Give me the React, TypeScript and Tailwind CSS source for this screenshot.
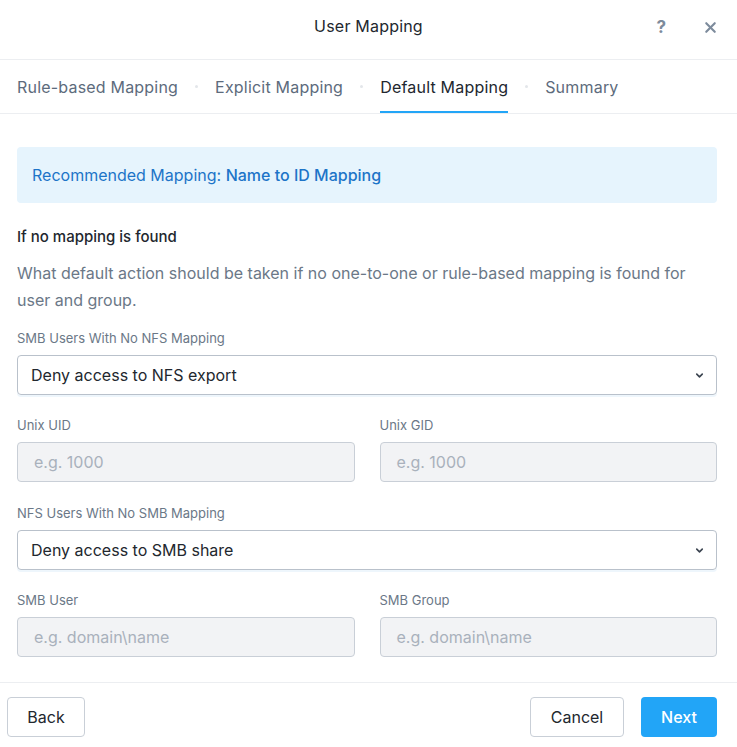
import { ChevronDown, X } from "lucide-react";

const TABS = ["Rule-based Mapping", "Explicit Mapping", "Default Mapping", "Summary"];

const Label = ({ children }: { children: React.ReactNode }) => (
  <div className="text-[13px] text-[#6b7887] leading-4 mb-[9px]">{children}</div>
);

const Select = ({ value }: { value: string }) => (
  <div className="h-10 rounded-[4px] border border-[#b9c1cb] flex items-center justify-between pl-[13px] pr-[11px] shadow-[0_2px_0_#eef6fc]">
    <span className="text-[16px] text-[#22272e]">{value}</span>
    <ChevronDown className="w-[11px] h-[11px] text-[#3b4450]" strokeWidth={3.5} />
  </div>
);

const Input = ({ placeholder }: { placeholder: string }) => (
  <div className="h-10 rounded-[4px] border border-[#c9cfd7] bg-[#f2f3f5] flex items-center px-[16px]">
    <span className="text-[16px] text-[#a9b1bc]">{placeholder}</span>
  </div>
);

export default function App() {
  return (
    <div className="w-[737px] h-[747px] bg-white flex flex-col font-['Inter',_sans-serif] overflow-hidden">
      {/* Header */}
      <div className="h-[60px] flex items-center justify-center relative border-b border-[#eceef1] pb-[8px] shrink-0">
        <span className="text-[16px] text-[#22272e] tracking-[0.2px]">User Mapping</span>
        <span className="absolute right-[71px] top-[15px] text-[17px] font-bold text-[#7d8b9c]">?</span>
        <X className="absolute right-[18px] top-[19px] w-[17px] h-[17px] text-[#7d8b9c]" strokeWidth={3} />
      </div>

      {/* Tabs */}
      <div className="h-[54px] flex items-stretch px-[17px] border-b border-[#eceef1] shrink-0">
        {TABS.map((t, i) => (
          <div key={t} className="flex items-stretch">
            {i > 0 && (
              <div className="flex items-center px-[17px]">
                <span className="w-[3px] h-[3px] rounded-full bg-[#e3e6ea]" />
              </div>
            )}
            <div
              className={
                "flex items-center text-[16px] tracking-[0.2px] border-b-2 pt-[2px] " +
                (t === "Default Mapping"
                  ? "border-[#22a5f7] text-[#22272e]"
                  : "border-transparent text-[#5d6b7c]")
              }
            >
              {t}
            </div>
          </div>
        ))}
      </div>

      {/* Body */}
      <div className="flex-1 pl-[17px] pr-[20px] pt-[33px] flex flex-col">
        <div className="h-[56px] rounded-[4px] bg-[#e6f4fd] flex items-center px-[15px] text-[16px] text-[#1d74c8]">
          Recommended Mapping:&nbsp;<span className="font-medium">Name to ID Mapping</span>
        </div>

        <div className="mt-[24px] text-[15px] font-medium text-[#22272e] leading-5">If no mapping is found</div>
        <p className="mt-[13px] text-[16px] text-[#6b7887] leading-[27px]">
          What default action should be taken if no one-to-one or rule-based mapping is found for user and group.
        </p>

        <div className="mt-[16px]">
          <Label>SMB Users With No NFS Mapping</Label>
          <Select value="Deny access to NFS export" />
        </div>

        <div className="mt-[22px] grid grid-cols-2 gap-[25px]">
          <div>
            <Label>Unix UID</Label>
            <Input placeholder="e.g. 1000" />
          </div>
          <div>
            <Label>Unix GID</Label>
            <Input placeholder="e.g. 1000" />
          </div>
        </div>

        <div className="mt-[23px]">
          <Label>NFS Users With No SMB Mapping</Label>
          <Select value="Deny access to SMB share" />
        </div>

        <div className="mt-[22px] grid grid-cols-2 gap-[25px]">
          <div>
            <Label>SMB User</Label>
            <Input placeholder="e.g. domain\name" />
          </div>
          <div>
            <Label>SMB Group</Label>
            <Input placeholder="e.g. domain\name" />
          </div>
        </div>
      </div>

      {/* Footer */}
      <div className="h-[65px] border-t border-[#eceef1] flex items-start justify-between pt-[14px] pl-[7px] pr-[20px] shrink-0">
        <button className="h-10 w-[78px] rounded-[4px] border border-[#c9cfd7] text-[16px] text-[#22272e]">Back</button>
        <div className="flex gap-[17px]">
          <button className="h-10 w-[94px] rounded-[4px] border border-[#c9cfd7] text-[16px] text-[#22272e]">Cancel</button>
          <button className="h-10 w-[76px] rounded-[4px] bg-[#22a5f7] text-[16px] font-medium text-white">Next</button>
        </div>
      </div>
    </div>
  );
}
